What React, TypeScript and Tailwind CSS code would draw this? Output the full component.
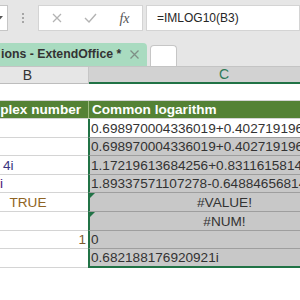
const rows = [
  { b: "", bCls: "pl-[3px] justify-start", c: "0.698970004336019+0.402719196273373i", cCls: "justify-start", h: "h-[19px]", bg: "bg-white", tri: false },
  { b: "", bCls: "pl-[3px] justify-start", c: "0.698970004336019+0.402719196273373i", cCls: "justify-start", h: "h-[18px]", bg: "bg-[#c8c8c8]", tri: false },
  { b: "4i", bCls: "pl-[36px] justify-start text-[#3b3680]", c: "1.17219613684256+0.831161581415081i", cCls: "justify-start", h: "h-[19px]", bg: "bg-[#c8c8c8]", tri: false },
  { b: "i", bCls: "pl-[33px] justify-start text-[#4a2378]", c: "1.89337571107278-0.648846568143381i", cCls: "justify-start", h: "h-[18px]", bg: "bg-[#c8c8c8]", tri: false },
  { b: "TRUE", bCls: "justify-center text-[#8f6424]", c: "#VALUE!", cCls: "justify-center", h: "h-[19px]", bg: "bg-[#c8c8c8]", tri: true },
  { b: "", bCls: "justify-start", c: "#NUM!", cCls: "justify-center", h: "h-[19px]", bg: "bg-[#c8c8c8]", tri: true },
  { b: "1", bCls: "justify-end pr-[3px] text-[#7d5a2c]", c: "0", cCls: "justify-start", h: "h-[18px]", bg: "bg-[#c8c8c8]", tri: false },
  { b: "", bCls: "justify-start", c: "0.682188176920921i", cCls: "justify-start", h: "h-[19px]", bg: "bg-[#c8c8c8]", tri: false },
];

export default function App() {
  return (
    <div className="w-[300px] h-[300px] overflow-hidden bg-white font-['Liberation_Sans',Arial,sans-serif] text-[#262626]">
      {/* formula bar */}
      <div className="h-[36px] bg-[#e6e6e6] flex items-start pt-[5px]">
        <div className="w-[40px] -ml-[32px] h-[26px] bg-white border border-[#c6c6c6] flex items-center justify-end pr-[4px]">
          <svg width="6" height="4" viewBox="0 0 6 4">
            <path d="M0 0 L6 0 L3 3.5 Z" fill="#555" />
          </svg>
        </div>
        <div className="w-[30px] h-[26px] flex flex-col items-center justify-center gap-[2px]">
          <span className="w-[2px] h-[2px] bg-[#a6a6a6]" />
          <span className="w-[2px] h-[2px] bg-[#a6a6a6]" />
          <span className="w-[2px] h-[2px] bg-[#a6a6a6]" />
        </div>
        <div className="w-[105px] h-[26px] bg-white border border-[#d4d4d4] flex items-center">
          <div className="w-[34px] flex justify-center pl-[2px]">
            <svg width="10" height="10" viewBox="0 0 10 10">
              <path d="M1 1 L9 9 M9 1 L1 9" stroke="#b3b3b3" strokeWidth="1.3" />
            </svg>
          </div>
          <div className="w-[34px] flex justify-center">
            <svg width="13" height="10" viewBox="0 0 13 10">
              <path d="M1 5 L5 9 L12 1" stroke="#b3b3b3" strokeWidth="1.4" fill="none" />
            </svg>
          </div>
          <div className="flex-1 flex justify-center font-['Liberation_Serif',serif] italic text-[14px] text-[#555]">
            fx
          </div>
        </div>
        <div className="ml-[3px] flex-1 h-[26px] bg-white border border-[#d4d4d4] flex items-center pl-[10px] text-[12px] text-[#262626]">
          =IMLOG10(B3)
        </div>
      </div>

      {/* sheet tabs */}
      <div className="h-[30px] bg-[#e6e6e6] flex items-end">
        <div className="w-[147px] h-[23px] bg-[#a9dbc0] rounded-tr-[4px] flex items-center pl-[1px]">
          <span className="font-bold text-[12.3px] text-[#333] whitespace-nowrap">ions - ExtendOffice *</span>
          <svg className="ml-[9px]" width="9" height="9" viewBox="0 0 9 9">
            <path d="M0.5 0.5 L8.5 8.5 M8.5 0.5 L0.5 8.5" stroke="#7f8f86" strokeWidth="1.3" />
          </svg>
        </div>
        <div className="ml-[3px] w-[27px] h-[21px] bg-white border border-b-0 border-[#c6c6c6] rounded-t-[4px]" />
      </div>

      {/* grid */}
      <div className="-ml-[33px] w-[392px]">
        <div className="flex h-[18px] border-t border-[#c4c4c4]">
          <div className="w-[122px] bg-[#e6e6e6] border-r border-[#c6c6c6] border-b border-b-[#bdbdbd] flex items-center justify-center text-[14px] text-[#333]">
            B
          </div>
          <div className="w-[270px] bg-[#d2d2d2] border-b-2 border-[#217346] flex items-center justify-center text-[14px] text-[#2f7a57]">
            C
          </div>
        </div>
        <div className="flex h-[17px]">
          <div className="w-[122px] border-b border-[#d4d4d4]" />
          <div className="w-[270px] border-b border-[#d4d4d4]" />
        </div>
        <div className="flex h-[18px] bg-[#548235] text-white font-bold text-[13.6px] leading-[16px]">
          <div className="w-[122px] border-r border-[#9dbb7d] border-b border-b-[#d4d4d4] flex items-end pl-[3px] whitespace-nowrap">
            Complex number
          </div>
          <div className="w-[270px] border-b border-[#d4d4d4] flex items-end pl-[3px] whitespace-nowrap">
            Common logarithm
          </div>
        </div>
        {rows.map((r, i) => {
          const last = i === rows.length - 1;
          return (
            <div key={i} className={`flex ${r.h} text-[13.6px] leading-[16px]`}>
              <div className={`w-[122px] -mr-[1px] border-b border-[#d4d4d4] flex items-end whitespace-nowrap ${r.bCls}`}>
                {r.b}
              </div>
              <div
                className={`relative w-[271px] ${r.bg} border-l-2 border-l-[#217346] flex items-end whitespace-nowrap overflow-hidden text-[#333] ${r.cCls} ${
                  last ? "border-b-2 border-b-[#217346]" : "border-b border-b-[#9e9e9e]"
                }`}
              >
                {r.tri && (
                  <span className="absolute left-0 top-0 w-0 h-0 border-t-[5px] border-r-[5px] border-t-[#217346] border-r-transparent" />
                )}
                <span className={r.cCls === "justify-start" ? "pl-[1px]" : ""}>{r.c}</span>
              </div>
            </div>
          );
        })}
      </div>
    </div>
  );
}
